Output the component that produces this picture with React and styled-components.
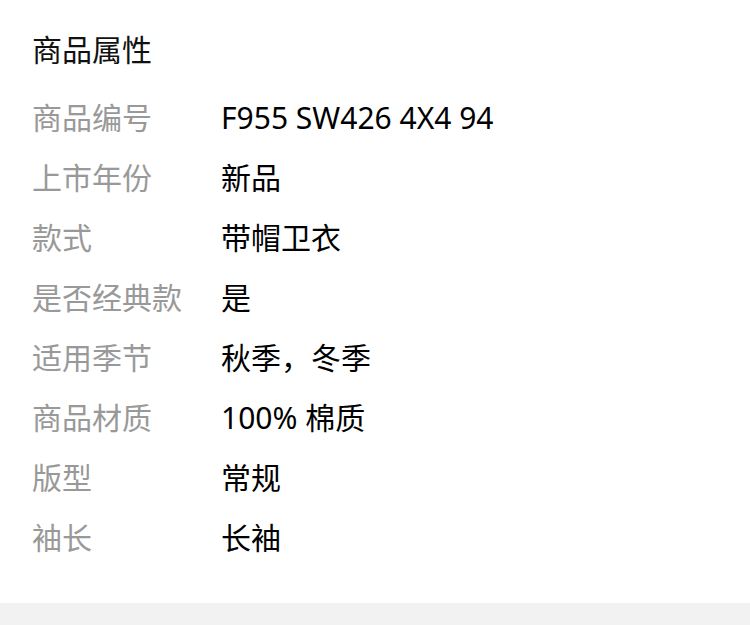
import styled, { createGlobalStyle } from "styled-components"

const GlobalStyle = createGlobalStyle`
  body {
    margin: 0;
    background: #fff;
    font-family: "Noto Sans", "Noto Sans CJK SC", sans-serif;
  }
`

const Page = styled.div`
  width: 750px;
  height: 625px;
  display: flex;
  flex-direction: column;
  overflow: hidden;
`

const Section = styled.section`
  padding: 20px 32px 35px 32px;
  background: #fff;
`

const Title = styled.h2`
  margin: 0 0 8px 0;
  font-size: 30px;
  font-weight: 400;
  line-height: 60px;
  color: #111;
`

const Row = styled.div`
  display: flex;
  height: 60px;
  align-items: center;
  font-size: 30px;
  line-height: 60px;
`

const Label = styled.div`
  width: 189px;
  flex-shrink: 0;
  color: #999;
`

const Value = styled.div`
  color: #000;
`

const Band = styled.div`
  flex: 1;
  background: #f2f2f2;
`

const attrs = [
  ["商品编号", "F955 SW426 4X4 94"],
  ["上市年份", "新品"],
  ["款式", "带帽卫衣"],
  ["是否经典款", "是"],
  ["适用季节", "秋季，冬季"],
  ["商品材质", "100% 棉质"],
  ["版型", "常规"],
  ["袖长", "长袖"],
]

const App = () => {
  return (
    <Page>
      <GlobalStyle />
      <Section>
        <Title>商品属性</Title>
        {attrs.map(([label, value]) => (
          <Row key={label}>
            <Label>{label}</Label>
            <Value>{value}</Value>
          </Row>
        ))}
      </Section>
      <Band />
    </Page>
  )
}

export default App
